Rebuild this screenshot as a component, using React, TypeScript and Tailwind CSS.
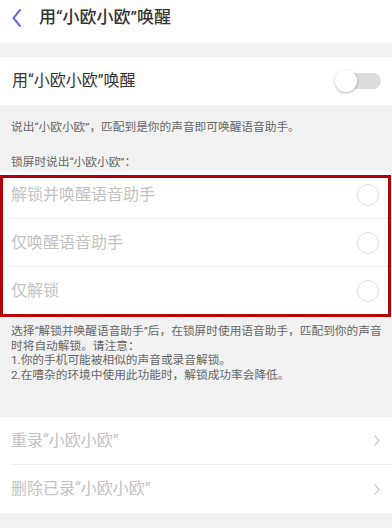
import React from "react";

const font = { fontFamily: '"Roboto", "Noto Sans CJK SC", sans-serif' };

function Radio() {
  return <div className="w-[22px] h-[22px] rounded-full border-[1.5px] border-[#dedede] bg-white" />;
}

function Chevron() {
  return (
    <svg width="6" height="11" viewBox="0 0 6 11" fill="none">
      <path d="M1 1 L5 5.5 L1 10" stroke="#d0d0d0" strokeWidth="1.3" strokeLinecap="round" strokeLinejoin="round" />
    </svg>
  );
}

function OptionRow({ label, last }: { label: string; last?: boolean }) {
  return (
    <div className="pl-[11px]">
      <div className={`h-[48px] flex items-center justify-between pr-[13px] ${last ? "" : "border-b border-[#ededed]"}`}>
        <span className="text-[16px] leading-none text-[#c2c2c2]">{label}</span>
        <Radio />
      </div>
    </div>
  );
}

function LinkRow({ label, last }: { label: string; last?: boolean }) {
  return (
    <div className="pl-[11px]">
      <div className={`h-[48px] flex items-center justify-between pr-[12px] ${last ? "" : "border-b border-[#ededed]"}`}>
        <span className="text-[16px] leading-none text-[#c2c2c2]">{label}</span>
        <Chevron />
      </div>
    </div>
  );
}

export default function App() {
  return (
    <div className="w-[392px] h-[528px] overflow-hidden bg-[#f2f2f2] relative" style={font}>
      {/* header */}
      <div className="h-[43px] bg-white flex items-center pb-[8px] pl-[12px]">
        <svg width="9" height="18" viewBox="0 0 9 18" fill="none">
          <path d="M8 1 L1.5 9 L8 17" stroke="#6f6fd8" strokeWidth="2" strokeLinecap="round" strokeLinejoin="round" />
        </svg>
        <span className="ml-[18px] text-[17px] leading-none font-medium text-[#333333]">用“小欧小欧”唤醒</span>
      </div>

      <div className="h-[14px]" />

      {/* toggle row */}
      <div className="h-[48px] bg-white flex items-center justify-between pl-[12px] pr-[11px]">
        <span className="text-[16px] leading-none text-[#333333]">用“小欧小欧”唤醒</span>
        <div className="relative w-[46px] h-[22px]">
          <div className="absolute right-0 top-[3px] w-[42px] h-[16px] rounded-full bg-[#dcdcdc]" />
          <div className="absolute left-0 top-0 w-[22px] h-[22px] rounded-full bg-white shadow-[0_1px_3px_rgba(0,0,0,0.3)]" />
        </div>
      </div>

      {/* description */}
      <div className="pl-[11px] pt-[14px] text-[11.7px] text-[#666666]">
        <div className="leading-[16px]">说出“小欧小欧”，匹配到是你的声音即可唤醒语音助手。</div>
        <div className="leading-[16px] mt-[19px]">锁屏时说出“小欧小欧”：</div>
      </div>

      <div className="h-[1px]" />

      {/* options */}
      <div className="bg-white">
        <OptionRow label="解锁并唤醒语音助手" />
        <OptionRow label="仅唤醒语音助手" />
        <OptionRow label="仅解锁" last />
      </div>

      {/* notes */}
      <div className="pl-[11px] pt-[9px] pb-[35px] text-[11.7px] leading-[14.5px] text-[#666666] whitespace-nowrap">
        <div>选择“解锁并唤醒语音助手”后，在锁屏时使用语音助手，匹配到你的声音</div>
        <div>时将自动解锁。请注意：</div>
        <div>1.你的手机可能被相似的声音或录音解锁。</div>
        <div>2.在嘈杂的环境中使用此功能时，解锁成功率会降低。</div>
      </div>

      <div className="bg-white">
        <LinkRow label="重录“小欧小欧”" />
        <LinkRow label="删除已录“小欧小欧”" last />
      </div>

      {/* annotation box */}
      <div className="absolute left-0 top-[175px] w-[391px] h-[142px] border-[3px] border-[#b40009] pointer-events-none" />
    </div>
  );
}
